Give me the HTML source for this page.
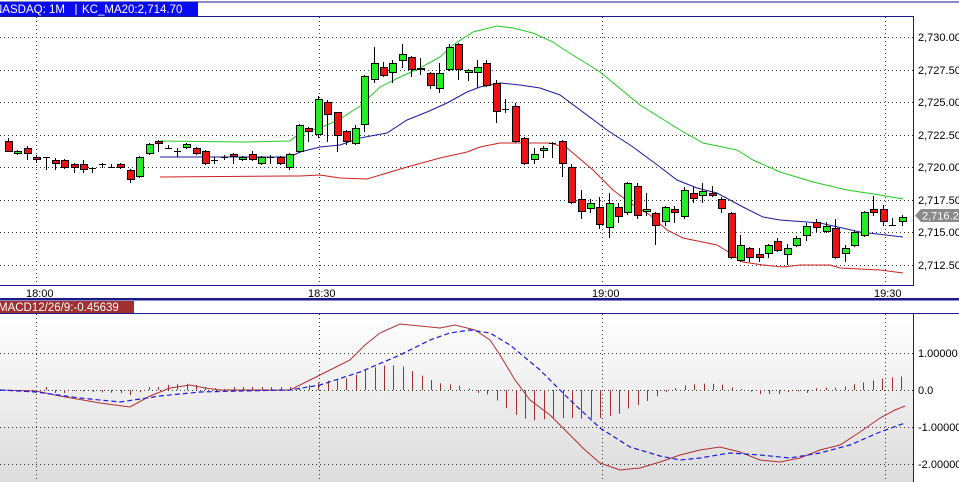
<!DOCTYPE html>
<html><head><meta charset="utf-8"><style>
html,body{margin:0;padding:0;width:959px;height:482px;overflow:hidden;background:#fff;font-family:"Liberation Sans",sans-serif;}
svg{display:block}
text{font-family:"Liberation Sans",sans-serif;font-size:11px;fill:#000}
</style></head><body>
<svg id="s" width="959" height="482" viewBox="0 0 959 482" xmlns="http://www.w3.org/2000/svg">
<defs><linearGradient id="g" x1="0" y1="0" x2="0" y2="1"><stop offset="0" stop-color="#ffffff"/><stop offset="1" stop-color="#dcdcdc"/></linearGradient></defs>
<rect x="0" y="0" width="959" height="482" fill="#fff"/>
<!-- header -->
<line x1="0" y1="2" x2="959" y2="2" stroke="#1a1a8a" stroke-width="1"/>
<rect x="0" y="2" width="198" height="14" fill="#0a0af0"/>
<text x="-6" y="13" style="fill:#fff;font-size:11.5px">NASDAQ: 1M</text>
<line x1="76" y1="4" x2="76" y2="15" stroke="#fff"/>
<text x="82" y="13" style="fill:#fff;font-size:11.5px">KC_MA20:2,714.70</text>
<!-- price frame -->
<line x1="0" y1="16.5" x2="913" y2="16.5" stroke="#1a1a8a"/>
<line x1="913.5" y1="16" x2="913.5" y2="285" stroke="#1a1a8a"/>
<line x1="0" y1="285.5" x2="914" y2="285.5" stroke="#1a1a8a"/>
<g stroke="#333" stroke-dasharray="1,3" stroke-width="1">
<line x1="0" y1="37.5" x2="913" y2="37.5"/><line x1="0" y1="70.5" x2="913" y2="70.5"/>
<line x1="0" y1="102.5" x2="913" y2="102.5"/><line x1="0" y1="135.5" x2="913" y2="135.5"/>
<line x1="0" y1="167.5" x2="913" y2="167.5"/><line x1="0" y1="200.5" x2="913" y2="200.5"/>
<line x1="0" y1="232.5" x2="913" y2="232.5"/><line x1="0" y1="265.5" x2="913" y2="265.5"/>
<line x1="36.5" y1="17" x2="36.5" y2="285"/><line x1="319.5" y1="17" x2="319.5" y2="285"/>
<line x1="602.5" y1="17" x2="602.5" y2="285"/><line x1="885.5" y1="17" x2="885.5" y2="285"/>
<line x1="36.5" y1="314" x2="36.5" y2="482"/><line x1="319.5" y1="314" x2="319.5" y2="482"/>
<line x1="602.5" y1="314" x2="602.5" y2="482"/><line x1="885.5" y1="314" x2="885.5" y2="482"/>
</g>
<g>
<text x="918" y="41">2,730.00</text><text x="918" y="74">2,727.50</text>
<text x="918" y="106">2,725.00</text><text x="918" y="139">2,722.50</text>
<text x="918" y="171">2,720.00</text><text x="918" y="204">2,717.50</text>
<text x="918" y="236">2,715.00</text><text x="918" y="269">2,712.50</text>
</g>
<polygon points="915,215.5 921,209 959,209 959,222 921,222" fill="#8a8a8a"/>
<text x="922" y="219.5" style="fill:#fff">2,716.25</text>
<text x="26" y="297">18:00</text><text x="308" y="297">18:30</text>
<text x="592" y="297">19:00</text><text x="874" y="297">19:30</text>
<g id="lines" fill="none" stroke-width="1">
<polyline stroke="#22cc22" points="160,141 245,142 290,141 300,133 320,128 340,119 360,106 380,87 400,77 420,68 440,57 453,45 473,32 497,26 513,28 533,33 553,42 560,47 600,72 640,105 680,130 703,143 737,150 753,160 780,172 813,182 847,190 880,195 903,199"/>
<polyline stroke="#1a1aa0" points="160,157 290,157 300,152 320,147 340,145 360,138 387,133 407,120 427,112 447,103 467,92 480,87 500,83 520,85 540,88 560,95 607,130 633,147 660,167 677,180 697,188 717,193 743,207 763,217 780,220 820,223 860,232 903,237"/>
<polyline stroke="#cc2020" points="160,177 290,176 300,176 320,175 340,178 367,179 387,173 407,167 440,158 467,152 480,147 500,143 550,143 567,148 593,170 613,190 630,203 650,215 667,230 683,238 717,245 730,253 743,262 763,265 783,267 800,265 830,265 840,268 880,270 903,273"/>
</g>
<g id="candles"></g>
<!-- separator & MACD -->
<rect x="0" y="298" width="959" height="2.5" fill="#1a1a8a"/>
<rect x="0" y="301" width="134" height="12" fill="#a03030"/>
<text x="-2" y="311" style="fill:#fff;font-size:11.5px">MACD12/26/9:-0.45639</text>
<line x1="0" y1="313.5" x2="959" y2="313.5" stroke="#1a1a8a"/>
<rect x="0" y="314" width="913" height="168" fill="url(#g)"/>
<line x1="913.5" y1="314" x2="913.5" y2="482" stroke="#1a1a8a"/>
<g stroke="#333" stroke-dasharray="1,3">
<line x1="0" y1="353.5" x2="913" y2="353.5"/><line x1="0" y1="390.5" x2="913" y2="390.5"/>
<line x1="0" y1="427.5" x2="913" y2="427.5"/><line x1="0" y1="464.5" x2="913" y2="464.5"/>
<line x1="36.5" y1="314" x2="36.5" y2="482"/><line x1="319.5" y1="314" x2="319.5" y2="482"/>
<line x1="602.5" y1="314" x2="602.5" y2="482"/><line x1="885.5" y1="314" x2="885.5" y2="482"/>
</g>
<text x="918" y="357">1.00000</text><text x="918" y="394">0.0</text>
<text x="918" y="431">-1.00000</text><text x="918" y="468">-2.00000</text>
<g id="hist" stroke="#a03030" stroke-width="1"></g>
<polyline id="macd" fill="none" stroke="#b03030" stroke-width="1" points="0,390 36,391 60,396 100,403 130,407 150,396 170,388 190,385 205,388 220,390 290,390 310,380 330,370 350,360 365,345 380,333 400,324 420,326 440,328 455,325 475,330 490,340 500,355 515,380 530,400 550,415 570,435 585,450 600,463 620,470 640,468 660,462 680,455 700,450 720,447 740,452 760,460 780,462 800,458 820,450 840,445 860,432 880,418 895,410 905,406"/>
<polyline id="sig" fill="none" stroke="#1a1ae0" stroke-width="1.2" stroke-dasharray="5,3" points="0,390 36,392 80,398 120,402 160,396 200,392 240,391 290,390 320,385 360,372 400,355 430,340 450,333 470,330 490,333 510,345 540,370 570,400 600,428 630,447 660,456 680,460 700,458 730,453 760,455 790,458 820,453 850,445 880,432 905,423"/>
</svg>
<script>
var C=[
[8,141,152,138,152],[17,154,151,150,155],[27,148,154,146,160],[36,157,160,155,163],[46,157,157,157,170],[55,160,164,158,170],[64,160,168,159,169],[74,164,168,163,173],[83,164,170,160,173],[92,168,168,168,173],
[102,164,164,163,168],[111,167,167,164,168],[120,164,168,163,169],[130,170,180,169,183],[139,177,157,156,178],[149,154,144,143,155],[158,141,144,140,152],[168,148,148,145,149],[177,151,151,148,157],[186,148,144,143,149],
[196,148,154,147,155],[205,151,164,150,165],[214,160,160,157,164],[224,157,157,155,160],[233,154,157,153,164],[242,160,157,156,161],[252,154,160,151,161],[261,164,157,156,165],[270,157,157,155,164],[280,157,164,156,165],
[289,168,154,153,170],[299,152,125,124,153],[308,128,132,127,142],[318,135,99,96,138],[327,102,115,100,142],[337,112,136,112,152],[346,131,142,130,145],[355,144,128,125,145],[364,125,76,75,132],[374,80,63,47,83],
[383,67,76,62,77],[392,73,63,60,83],[402,61,54,44,68],[411,57,70,56,77],[420,68,70,58,75],[430,73,86,72,89],[439,89,73,63,93],[449,70,47,44,71],[458,44,70,43,80],[468,73,70,69,81],
[477,73,67,60,88],[486,63,86,60,87],[496,83,112,80,123],[505,109,109,99,113],[515,106,142,103,143],[524,138,164,137,165],[534,160,154,148,164],[543,151,148,146,158],[552,143,143,142,158],[562,141,164,140,177],
[571,167,203,164,204],[581,199,212,190,219],[590,209,203,199,213],[599,207,225,197,229],[609,228,203,193,238],[618,207,217,203,223],[627,213,183,182,215],[637,186,216,183,219],[646,212,209,193,216],[655,213,226,212,245],
[665,222,207,206,226],[674,209,213,206,223],[684,217,190,187,219],[693,193,199,187,203],[702,196,191,183,203],[712,193,196,186,197],[721,199,209,197,213],[731,213,258,212,259],[740,261,245,235,262],[749,248,258,247,262],
[759,254,258,248,262],[768,254,245,244,258],[777,241,251,238,252],[787,255,248,244,265],[796,246,238,236,247],[806,236,226,223,241],[816,222,228,219,232],[826,232,226,222,233],[835,228,258,219,259],[845,254,248,245,262],
[854,246,232,231,247],[864,236,212,211,237],[873,209,213,196,216],[883,209,222,205,226],[892,225,225,218,226],[902,222,217,215,226]];
var s='';
C.forEach(function(c){var x=c[0],o=c[1],cl=c[2],hi=Math.min(c[3],o,cl),lo=Math.max(c[4],o,cl);
s+='<line x1="'+(x+0.5)+'" y1="'+hi+'" x2="'+(x+0.5)+'" y2="'+lo+'" stroke="#000"/>';
var t=Math.min(o,cl),h=Math.abs(o-cl);
if(h<2){s+='<line x1="'+(x-3)+'" y1="'+(t+0.5)+'" x2="'+(x+4)+'" y2="'+(t+0.5)+'" stroke="#000"/>';}
else s+='<rect x="'+(x-3)+'.5" y="'+t+'.5" width="7" height="'+(h-1)+'" fill="'+(cl<o?'#22ee22':'#ee1111')+'" stroke="#000"/>';});
document.getElementById('candles').innerHTML=s;
function pts(id){return document.getElementById(id).getAttribute('points').trim().split(/\s+/).map(function(p){return p.split(',').map(Number)});}
function interp(P,x){for(var i=1;i<P.length;i++){if(x<=P[i][0]){var a=P[i-1],b=P[i];return a[1]+(b[1]-a[1])*(x-a[0])/(b[0]-a[0]);}}return P[P.length-1][1];}
var M=pts('macd'),S=pts('sig'),h='';
for(var i=4;i<96;i++){var x=8+9.4*i;var d=(interp(S,x)-interp(M,x))*0.8;
if(Math.abs(d)<1)d=d<0?-3:3;var xx=Math.round(x)+0.5;h+='<line x1="'+xx+'" y1="390" x2="'+xx+'" y2="'+(390-d)+'"/>';}
document.getElementById('hist').innerHTML=h;
</script>
</body></html>
